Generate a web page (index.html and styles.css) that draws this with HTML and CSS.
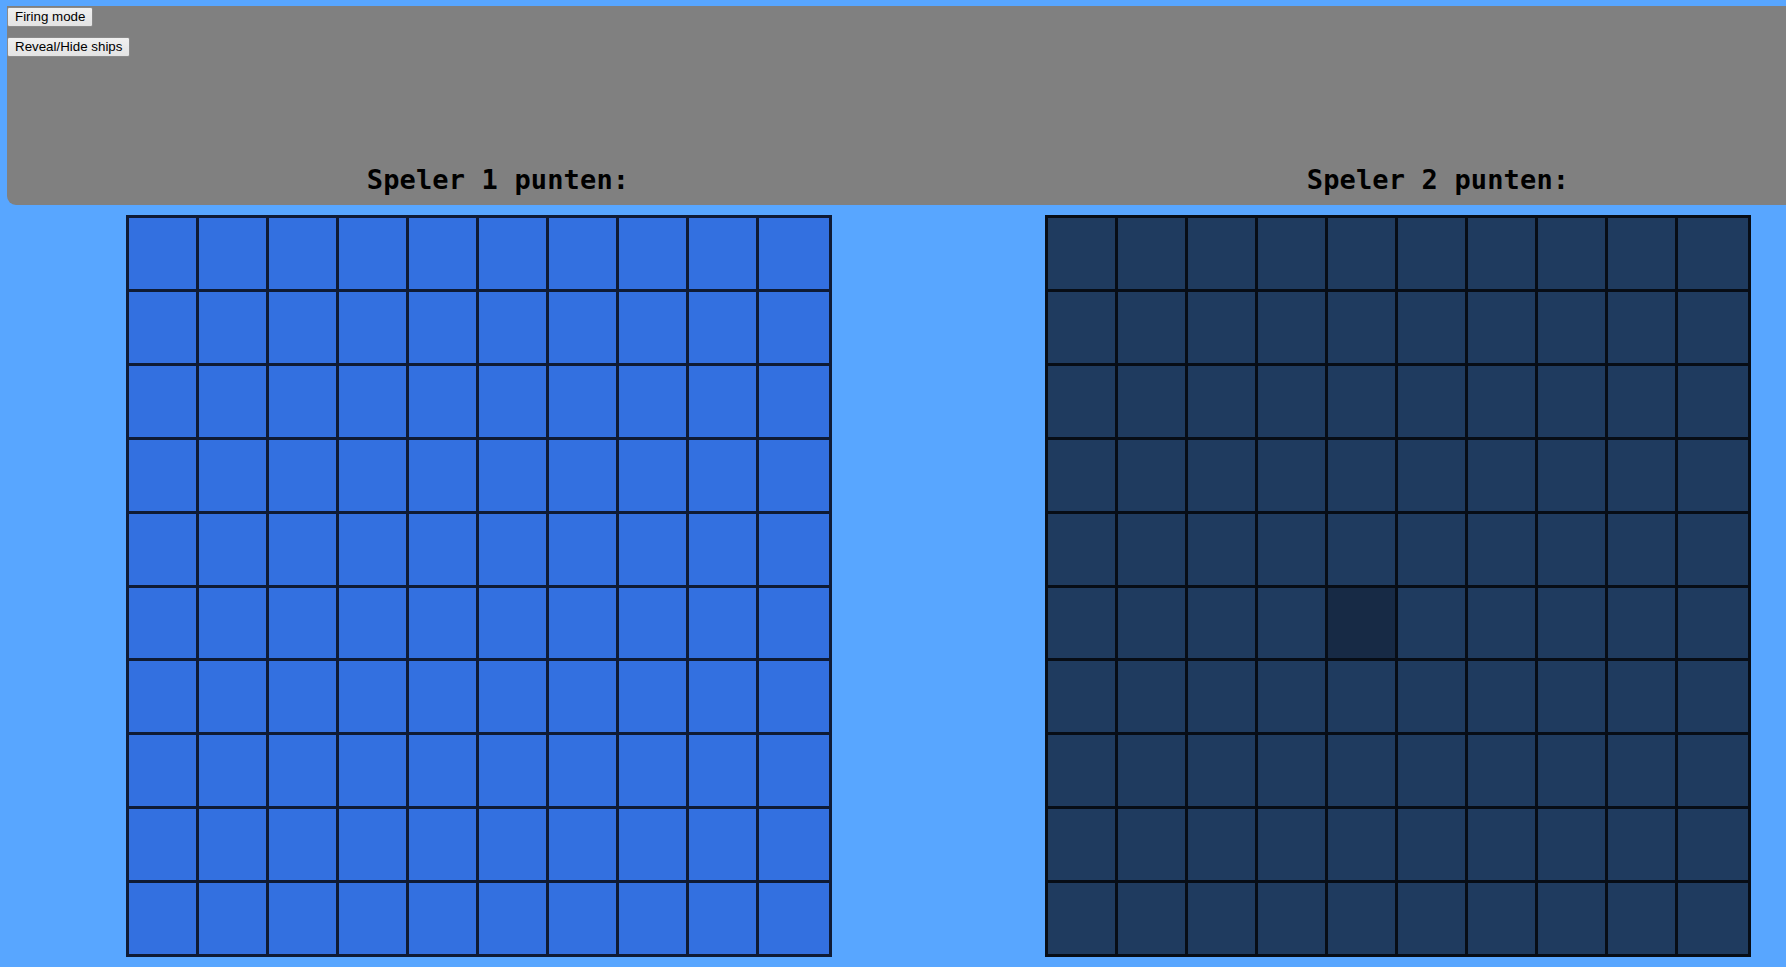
FILE: index.html
```html
<!DOCTYPE html>
<html>
<head>
<meta charset="utf-8">
<link rel="stylesheet" href="styles.css">
</head>
<body>
<div class="panel">
  <div class="controls">
    <button class="btn">Firing mode</button>
    <button class="btn">Reveal/Hide ships</button>
  </div>
  <div class="scores">
    <h2 class="score">Speler 1 punten:</h2>
    <h2 class="score">Speler 2 punten:</h2>
  </div>
</div>
<div class="boards">
  <div class="board board-own" id="b1"></div>
  <div class="board board-enemy" id="b2"></div>
</div>
<script src="script.js"></script>
</body>
</html>
```
FILE: styles.css
```css
html, body {
  margin: 0;
  padding: 0;
}
body {
  background: #58a6ff;
  width: 1786px;
  height: 967px;
  overflow: hidden;
}
.panel {
  margin: 6px 0 0 7px;
  height: 199px;
  background: #808080;
  border-bottom-left-radius: 9px;
  display: flex;
  flex-direction: column;
  overflow: hidden;
}
.controls {
  display: flex;
  flex-direction: column;
  align-items: flex-start;
  gap: 10px;
  padding-top: 1px;
}
.btn {
  font-family: "Liberation Sans", Arial, sans-serif;
  font-size: 13.33px;
  line-height: 16px;
  color: #000;
  background: linear-gradient(#f0f0f0, #e3e3e3);
  border: 1px solid #8a8a8a;
  border-radius: 2px;
  padding: 1px 7px;
  margin: 0;
  height: 20px;
}
.scores {
  margin-top: auto;
  display: grid;
  grid-template-columns: 940px 940px;
  padding-left: 21px;
  padding-bottom: 9px;
}
.score {
  margin: 0;
  font-family: "DejaVu Sans Mono", monospace;
  font-weight: bold;
  font-size: 27px;
  letter-spacing: 0.15px;
  line-height: 32px;
  text-align: center;
  color: #000;
  white-space: nowrap;
}
.boards {
  display: flex;
  gap: 213px;
  padding-left: 126px;
  margin-top: 10px;
}
.board {
  width: 706px;
  height: 742px;
  box-sizing: border-box;
  padding: 3px;
  display: grid;
  grid-template-columns: repeat(9, 67px) 1fr;
  grid-template-rows: repeat(10, 1fr);
  gap: 3px;
}
.board-own {
  background: #0f1b35;
}
.board-own .cell {
  background: #3370e0;
}
.board-enemy {
  background: #070d16;
}
.board-enemy .cell {
  background: #1f3b5f;
}
.board-enemy .cell.hover {
  background: #172a45;
}
```
FILE: script.js
```js
function build(id, hoverIndex) {
  var el = document.getElementById(id);
  for (var i = 0; i < 100; i++) {
    var c = document.createElement('div');
    c.className = 'cell' + (i === hoverIndex ? ' hover' : '');
    el.appendChild(c);
  }
}
build('b1', -1);
build('b2', 54);
```
